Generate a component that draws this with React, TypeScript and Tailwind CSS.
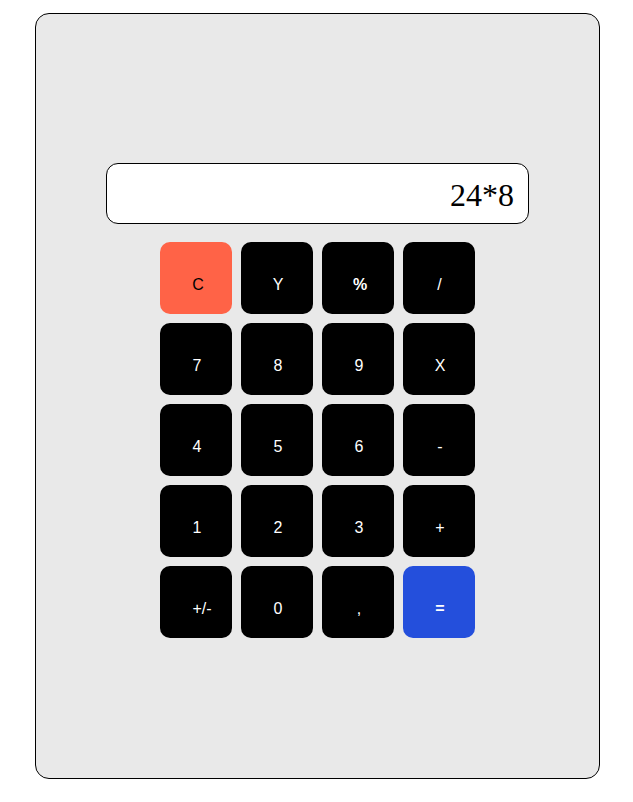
const keys: { label: string; className: string }[] = [
  { label: 'C', className: 'bg-[#ff6347] text-black font-medium pl-[4px]' },
  { label: 'Y', className: 'bg-black text-white pl-[2px]' },
  { label: '%', className: 'bg-black text-white font-bold pl-[4px]' },
  { label: '/', className: 'bg-black text-white pl-[1px]' },
  { label: '7', className: 'bg-black text-white pl-[2px]' },
  { label: '8', className: 'bg-black text-white pl-[2px]' },
  { label: '9', className: 'bg-black text-white pl-[2px]' },
  { label: 'X', className: 'bg-black text-white pl-[2px]' },
  { label: '4', className: 'bg-black text-white pl-[2px]' },
  { label: '5', className: 'bg-black text-white pl-[2px]' },
  { label: '6', className: 'bg-black text-white pl-[2px]' },
  { label: '-', className: 'bg-black text-white pl-[2px]' },
  { label: '1', className: 'bg-black text-white pl-[2px]' },
  { label: '2', className: 'bg-black text-white pl-[2px]' },
  { label: '3', className: 'bg-black text-white pl-[2px]' },
  { label: '+', className: 'bg-black text-white pl-[2px]' },
  { label: '+/-', className: 'bg-black text-white pl-[12px]' },
  { label: '0', className: 'bg-black text-white pl-[2px]' },
  { label: ',', className: 'bg-black text-white pl-[2px]' },
  { label: '=', className: 'bg-[#244fdc] text-white font-bold pl-[2px]' },
];

function App() {
  return (
    <div className="min-h-[802px] w-[633px] pl-[35px] pt-[13px] font-['Liberation_Sans',Arial,sans-serif]">
      <div className="flex h-[766px] w-[565px] flex-col items-center rounded-[14px] border border-black bg-[#e9e9e9] pt-[149px]">
        <div className="flex h-[61px] w-[423px] items-center justify-end rounded-[12px] border border-black bg-white pr-[14px] pt-[2px] font-['Liberation_Serif','Times_New_Roman',serif] text-[32px] text-black">
          24*8
        </div>
        <div className="mt-[18px] grid grid-cols-[repeat(4,72px)] gap-[9px]">
          {keys.map(k => (
            <button
              key={k.label}
              className={
                'flex h-[72px] w-[72px] items-center justify-center rounded-[10px] pt-[13px] text-[16px] ' +
                k.className
              }
            >
              {k.label}
            </button>
          ))}
        </div>
      </div>
    </div>
  );
}

export default App;
